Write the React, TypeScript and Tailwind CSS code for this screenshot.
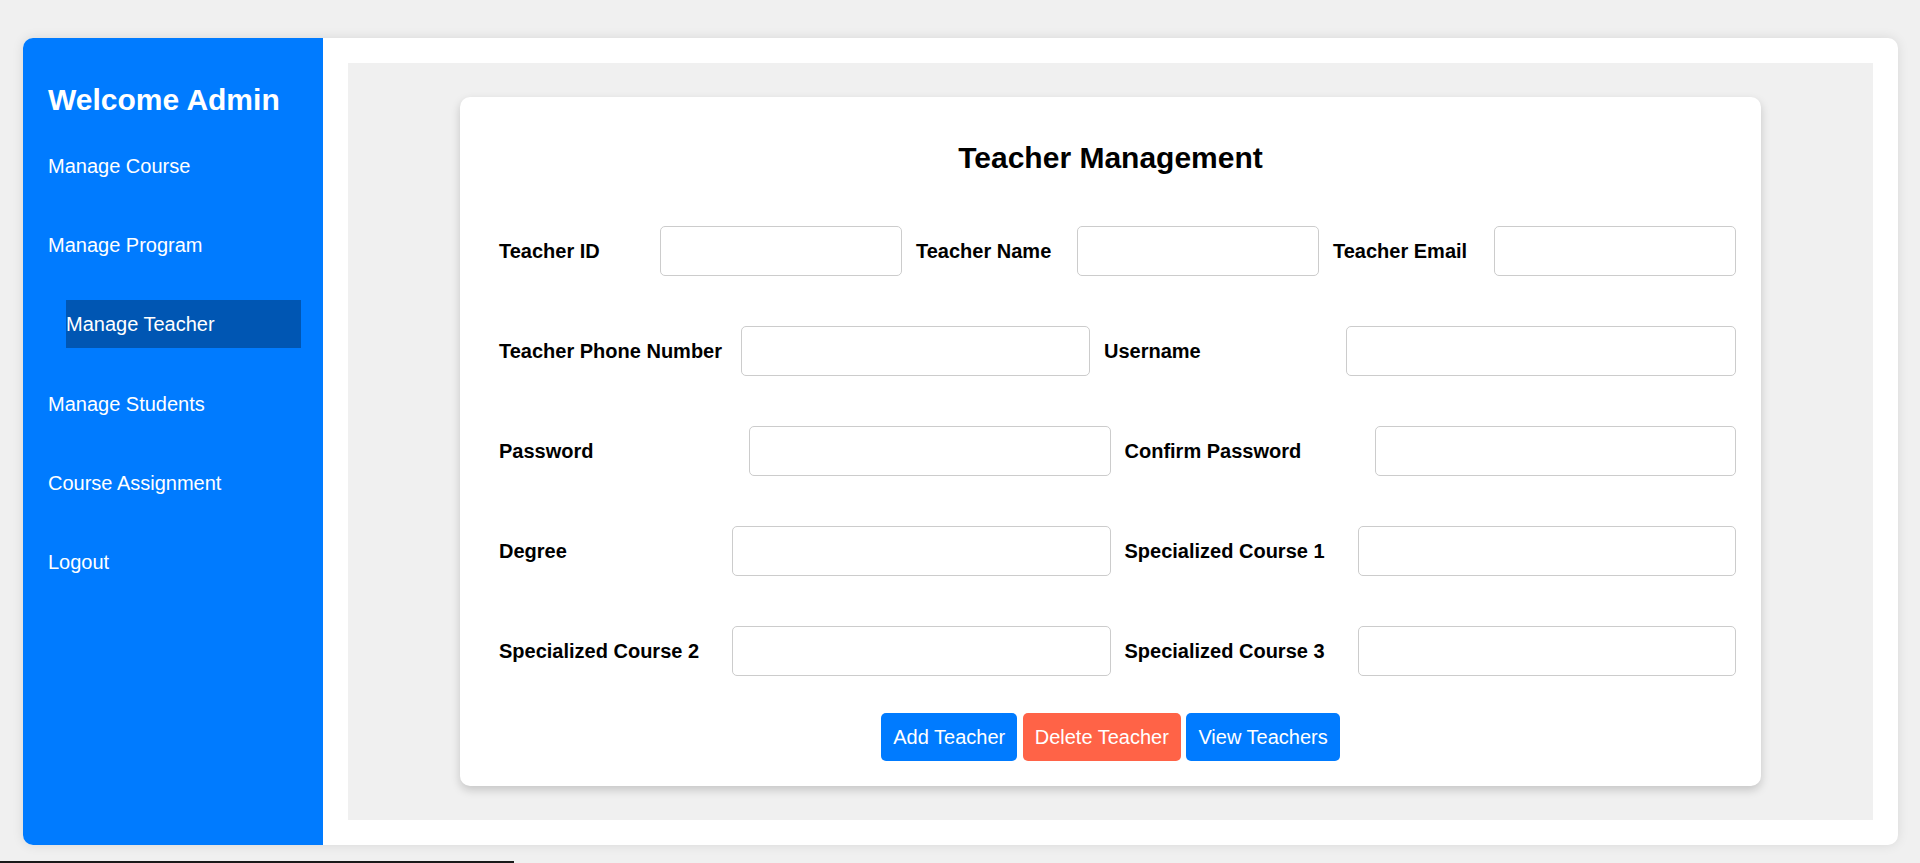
import React from "react";

const menu = [
  "Manage Course",
  "Manage Program",
  "Manage Teacher",
  "Manage Students",
  "Course Assignment",
  "Logout",
];

function Sidebar() {
  return (
    <aside className="w-[300px] shrink-0 bg-[#007bff] text-white pt-[45px] px-[25px]">
      <h2 className="text-[30px] font-bold leading-[34.5px]">Welcome Admin</h2>
      <ul className="mt-[24px] flex flex-col gap-[31.4px]">
        {menu.map((item) => (
          <li
            key={item}
            className={
              item === "Manage Teacher"
                ? "h-[48px] flex items-center text-[20px] ml-[18px] w-[235px] bg-[#0056b3]"
                : "h-[48px] flex items-center text-[20px]"
            }
          >
            {item}
          </li>
        ))}
      </ul>
    </aside>
  );
}

function Field({ label, labelW, inputW }: { label: string; labelW: string; inputW?: string }) {
  return (
    <>
      <label className={`ml-[14px] shrink-0 text-[20px] font-bold ${labelW}`}>{label}</label>
      <input
        type="text"
        className={`h-[50px] min-w-0 rounded-[5px] border border-[#ccc] bg-white px-[12px] text-[20px] outline-none ${inputW ?? "flex-1"}`}
      />
    </>
  );
}

export default function App() {
  return (
    <div
      className="relative min-h-screen bg-[#f0f0f0] pt-[38px] pl-[23px] pr-[22px]"
      style={{ fontFamily: '"Liberation Sans", Arial, sans-serif' }}
    >
      <div className="flex h-[807px] overflow-hidden rounded-[10px] bg-white shadow-[0_0_12px_rgba(0,0,0,0.1)]">
        <Sidebar />

        {/* Main area */}
        <main className="flex-1 p-[25px]">
          <div className="flex h-full items-center justify-center bg-[#f0f0f0]">
            <div className="w-[1301px] rounded-[10px] bg-white px-[25px] pt-[44px] pb-[25px] shadow-[0_4px_10px_rgba(0,0,0,0.18)]">
              <h2 className="text-center text-[30px] font-bold leading-[34.5px] text-black">
                Teacher Management
              </h2>

              <div className="mt-[50px] flex flex-col gap-[50px] text-black">
                <div className="flex items-center">
                  <Field label="Teacher ID" labelW="w-[161px]" />
                  <Field label="Teacher Name" labelW="w-[161px]" />
                  <Field label="Teacher Email" labelW="w-[161px]" />
                </div>
                <div className="flex items-center">
                  <Field label="Teacher Phone Number" labelW="w-[241.5px]" inputW="w-[349.5px]" />
                  <Field label="Username" labelW="w-[241.5px]" />
                </div>
                <div className="flex items-center">
                  <Field label="Password" labelW="w-[250.3px]" />
                  <Field label="Confirm Password" labelW="w-[250.3px]" />
                </div>
                <div className="flex items-center">
                  <Field label="Degree" labelW="w-[233px]" />
                  <Field label="Specialized Course 1" labelW="w-[233px]" />
                </div>
                <div className="flex items-center">
                  <Field label="Specialized Course 2" labelW="w-[233px]" />
                  <Field label="Specialized Course 3" labelW="w-[233px]" />
                </div>
              </div>

              <div className="mt-[37px] flex justify-center gap-[5.5px]">
                <button className="h-[48px] rounded-[5px] bg-[#007bff] px-[12px] text-[20px] text-white">
                  Add Teacher
                </button>
                <button className="h-[48px] rounded-[5px] bg-[#ff6347] px-[12px] text-[20px] text-white">
                  Delete Teacher
                </button>
                <button className="h-[48px] rounded-[5px] bg-[#007bff] px-[12px] text-[20px] text-white">
                  View Teachers
                </button>
              </div>
            </div>
          </div>
        </main>
      </div>

      {/* thin dark bar at the bottom edge */}
      <div className="absolute bottom-0 left-0 h-[2px] w-[514px] bg-[#1a1a1a]" />
    </div>
  );
}
